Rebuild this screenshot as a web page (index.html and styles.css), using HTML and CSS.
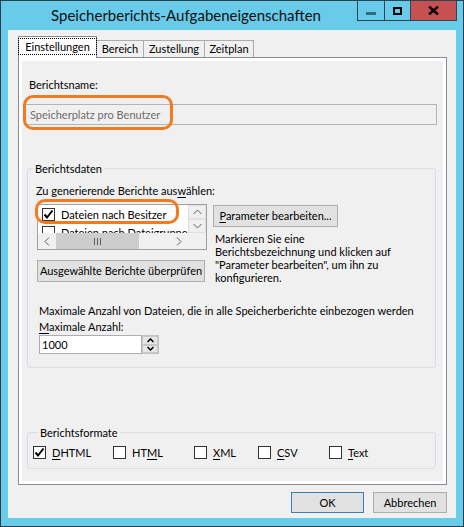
FILE: index.html
```html
<!DOCTYPE html>
<html lang="de">
<head>
<meta charset="utf-8">
<title>Speicherberichts-Aufgabeneigenschaften</title>
<link rel="stylesheet" href="styles.css">
</head>
<body>
<div class="window">
  <div class="titlebar">
    <div class="title">Speicherberichts-Aufgabeneigenschaften</div>
    <div class="controls">
      <div class="ctrl ctrl-min"><span class="min-glyph"></span></div>
      <div class="ctrl ctrl-max"><span class="max-glyph"></span></div>
      <div class="ctrl ctrl-close">
        <svg width="11" height="9" viewBox="0 0 11 9"><path d="M1 0.5 L10 8.5 M10 0.5 L1 8.5" stroke="#000" stroke-width="2.4" fill="none"/></svg>
      </div>
    </div>
  </div>
  <div class="client">
    <div class="tabs">
      <div class="tab tab-active"><span class="focus">Einstellungen</span></div>
      <div class="tab tab-w1">Bereich</div>
      <div class="tab tab-w2">Zustellung</div>
      <div class="tab tab-w3">Zeitplan</div>
    </div>
    <div class="panel">
      <div class="page">
        <div class="lbl-name">Berichtsname:</div>
        <div class="textbox">Speicherplatz pro Benutzer</div>

        <fieldset class="group group-data">
          <legend>Berichtsdaten</legend>
          <div class="select-lbl">Zu generierende Berichte aus<u>w</u>ählen:</div>
          <div class="data-grid">
            <div class="left-col">
              <div class="listbox">
                <div class="list-items">
                  <div class="list-row"><span class="cb"><svg width="11" height="11" viewBox="0 0 11 11"><path d="M1.5 5.5 L4 8.5 L9.5 1.5" stroke="#000" stroke-width="2" fill="none"/></svg></span><span>Dateien nach Besitzer</span></div>
                  <div class="list-row"><span class="cb"></span><span>Dateien nach Dateigruppe</span></div>
                </div>
                <div class="vscroll">
                  <div class="sbtn"><svg width="9" height="6" viewBox="0 0 9 6"><path d="M0.5 5 L4.5 1 L8.5 5" stroke="#606060" stroke-width="1" fill="none"/></svg></div>
                  <div class="sbtn"><svg width="9" height="6" viewBox="0 0 9 6"><path d="M0.5 1 L4.5 5 L8.5 1" stroke="#606060" stroke-width="1" fill="none"/></svg></div>
                </div>
                <div class="hscroll">
                  <div class="harrow"><svg width="6" height="9" viewBox="0 0 6 9"><path d="M5 0.5 L1 4.5 L5 8.5" stroke="#606060" stroke-width="1" fill="none"/></svg></div>
                  <div class="thumb"><span class="grip"></span><span class="grip"></span><span class="grip"></span></div>
                  <div class="track"></div>
                  <div class="harrow"><svg width="6" height="9" viewBox="0 0 6 9"><path d="M1 0.5 L5 4.5 L1 8.5" stroke="#606060" stroke-width="1" fill="none"/></svg></div>
                </div>
                <div class="corner"></div>
              </div>
              <button class="btn btn-check">Ausgewählte Berichte überprüfen</button>
            </div>
            <div class="right-col">
              <button class="btn btn-param"><u>P</u>arameter bearbeiten...</button>
              <p class="hint">Markieren Sie eine<br>Berichtsbezeichnung und klicken auf<br>"Parameter bearbeiten", um ihn zu<br>konfigurieren.</p>
            </div>
          </div>
          <div class="max-text">Maximale Anzahl von Dateien, die in alle Speicherberichte einbezogen werden</div>
          <div class="max-lbl"><u>M</u>aximale Anzahl:</div>
          <div class="spin">
            <div class="spin-input">1000</div>
            <div class="spin-btns">
              <div class="spin-btn"><svg width="7" height="5" viewBox="0 0 7 5"><path d="M0.5 4 L3.5 1 L6.5 4" stroke="#000" stroke-width="1.5" fill="none"/></svg></div>
              <div class="spin-btn"><svg width="7" height="5" viewBox="0 0 7 5"><path d="M0.5 1 L3.5 4 L6.5 1" stroke="#000" stroke-width="1.5" fill="none"/></svg></div>
            </div>
          </div>
        </fieldset>

        <fieldset class="group group-formats">
          <legend>Berichtsformate</legend>
          <div class="formats">
            <label class="fmt fmt-1"><span class="cb"><svg width="11" height="11" viewBox="0 0 11 11"><path d="M1.5 5.5 L4 8.5 L9.5 1.5" stroke="#000" stroke-width="2" fill="none"/></svg></span><span><u>D</u>HTML</span></label>
            <label class="fmt fmt-2"><span class="cb"></span><span>HT<u>M</u>L</span></label>
            <label class="fmt fmt-3"><span class="cb"></span><span><u>X</u>ML</span></label>
            <label class="fmt fmt-4"><span class="cb"></span><span><u>C</u>SV</span></label>
            <label class="fmt fmt-5"><span class="cb"></span><span><u>T</u>ext</span></label>
          </div>
        </fieldset>
      </div>
    </div>
    <div class="buttons">
      <button class="btn btn-ok">OK</button>
      <button class="btn btn-cancel">Abbrechen</button>
    </div>
  </div>
  <div class="mark mark-name"></div>
  <div class="mark mark-row"></div>
</div>
</body>
</html>
```

FILE: styles.css
```css
* { box-sizing: border-box; }
html, body { margin: 0; padding: 0; }
body {
  width: 464px;
  height: 527px;
  font-family: Lato, "Liberation Sans", sans-serif;
  font-size: 11px;
  color: #000;
  background: #68cbe9;
}
u { text-decoration: underline; text-underline-offset: 2px; }

.window {
  position: relative;
  width: 464px;
  height: 527px;
  border: 1px solid #2b3f48;
  background: #68cbe9;
  padding: 0 7px 8px 7px;
  display: flex;
  flex-direction: column;
}

.titlebar { height: 29px; display: flex; flex: none; }
.title {
  flex: 1;
  text-align: center;
  padding-left: 7px;
  font-size: 15px;
  line-height: 29px;
  color: #111;
}
.controls { display: flex; height: 21px; margin-top: -1px; margin-right: -1px; }
.ctrl {
  height: 21px;
  border: 1px solid #2c4552;
  border-left: none;
  display: flex;
  align-items: center;
  justify-content: center;
}
.ctrl-min { width: 28px; border-left: 1px solid #2c4552; }
.ctrl-max { width: 26px; }
.ctrl-close { width: 46px; background: #c75050; }
.min-glyph { width: 10px; height: 3px; background: #2c6d83; margin-top: 5px; }
.max-glyph { width: 9px; height: 8px; border: 2px solid #000; margin-top: 1px; }

.client {
  flex: 1;
  background: #f0f0f0;
  padding: 7px 9px 0 10px;
  display: flex;
  flex-direction: column;
}

.tabs { display: flex; align-items: flex-end; height: 20px; }
.tab {
  height: 17px;
  border: 1px solid #acacac;
  border-bottom: none;
  background: #f0f0f0;
  margin-left: -1px;
  line-height: 16px;
  text-align: center;
}
.tab-active {
  position: relative;
  z-index: 1;
  margin-left: 0;
  width: 79px;
  height: 22px;
  margin-bottom: -1px;
  background: #fff;
  border-color: #898c95;
  padding-top: 2px;
}
.focus {
  display: inline-block;
  outline: 1px dotted #000;
  padding: 0 6px;
  line-height: 15px;
}
.tab-w1 { width: 48px; }
.tab-w2 { width: 62px; }
.tab-w3 { width: 50px; }

.panel {
  height: 428px;
  border: 1px solid #898c95;
  background: #fff;
  padding: 3px;
  flex: none;
}
.page { height: 100%; background: #f0f0f0; overflow: hidden; }

.lbl-name { margin: 16px 0 0 7px; line-height: 15px; }
.textbox {
  margin: 12px 0 0 2px;
  width: 413px;
  height: 21px;
  border: 1px solid #b4b4b4;
  background: #f0f0f0;
  color: #6d6d6d;
  padding-left: 5px;
  line-height: 19px;
}

.group {
  margin: 0 0 0 5px;
  padding: 0;
  width: 409px;
  min-width: 0;
  border: 1px solid #d5dfe5;
  border-radius: 3px;
}
.group legend { margin-left: 5px; padding: 0 2px; line-height: 15px; }
.group-data { margin-top: 36px; padding-bottom: 13px; }
.select-lbl { margin: 7px 0 0 8px; line-height: 15px; }

.data-grid {
  display: grid;
  grid-template-columns: 170px 1fr;
  column-gap: 6px;
  margin: 6px 0 0 9px;
}
.left-col { display: flex; flex-direction: column; }
.listbox {
  width: 170px;
  height: 46px;
  border: 1px solid #a0a0a0;
  background: #fff;
  display: grid;
  grid-template-columns: 1fr 18px;
  grid-template-rows: 28px 16px;
  overflow: hidden;
}
.list-items { overflow: hidden; background: #fff; }
.list-row { display: flex; align-items: center; height: 17px; padding-left: 4px; margin-top: 1px; white-space: nowrap; }
.list-row .cb { margin-right: 6px; }
.vscroll { background: #f0f0f0; display: flex; flex-direction: column; }
.sbtn {
  height: 14px;
  display: flex;
  align-items: center;
  justify-content: center;
  border: 1px solid #e0e0e0;
  background: #f0f0f0;
}
.hscroll { display: flex; background: #f0f0f0; }
.harrow { width: 18px; display: flex; align-items: center; justify-content: center; }
.thumb {
  width: 83px;
  background: #cdcdcd;
  display: flex;
  align-items: center;
  justify-content: center;
  gap: 2px;
}
.grip { width: 1px; height: 7px; background: #606060; }
.track { flex: 1; }
.corner { background: #f0f0f0; }

.btn {
  font-family: inherit;
  font-size: 11px;
  color: #000;
  background: #e1e1e1;
  border: 1px solid #adadad;
  border-radius: 0;
  padding: 0;
  height: 22px;
  line-height: 18px;
  white-space: nowrap;
}
.btn-check { width: 168px; margin-top: 10px; }
.btn-param { width: 125px; margin-top: 1px; }
.right-col { display: flex; flex-direction: column; align-items: flex-start; }
.hint { margin: 5px 0 0 2px; line-height: 13px; white-space: nowrap; }

.max-text { margin: 19px 0 0 11px; line-height: 16px; white-space: nowrap; }
.max-lbl { margin-left: 11px; line-height: 16px; }
.spin { display: flex; margin: 0 0 0 11px; height: 19px; }
.spin-input {
  width: 103px;
  border: 1px solid #abadb3;
  background: #fff;
  padding-left: 2px;
  line-height: 17px;
}
.spin-btns { width: 17px; display: flex; flex-direction: column; background: #d4d4d4; border: 1px solid #c4c4c4; border-left: none; }
.spin-btn { flex: 1; display: flex; align-items: center; justify-content: center; background: #e6e6e6; border: 1px solid #c8c8c8; }

.group-formats { margin-top: 57px; padding: 5px 0 8px 5px; }
.formats { display: flex; height: 15px; align-items: center; }
.fmt { display: flex; align-items: center; }
.fmt .cb { margin-right: 6px; }
.fmt-1 { width: 80px; }
.fmt-2 { width: 81px; }
.fmt-3 { width: 64px; }
.fmt-4 { width: 71px; }

.cb {
  width: 13px;
  height: 13px;
  border: 1px solid #333;
  background: #fff;
  flex: none;
  display: flex;
  align-items: center;
  justify-content: center;
}

.buttons { display: flex; justify-content: flex-end; gap: 9px; margin-top: 7px; }
.btn-ok { width: 73px; height: 21px; border-color: #3c7fb1; }
.btn-cancel { width: 74px; height: 21px; }

.mark {
  position: absolute;
  border: 3px solid #f37a1f;
  border-radius: 10px;
}
.mark-name { left: 22px; top: 94px; width: 150px; height: 35px; }
.mark-row { left: 34px; top: 198px; width: 144px; height: 25px; }
```
